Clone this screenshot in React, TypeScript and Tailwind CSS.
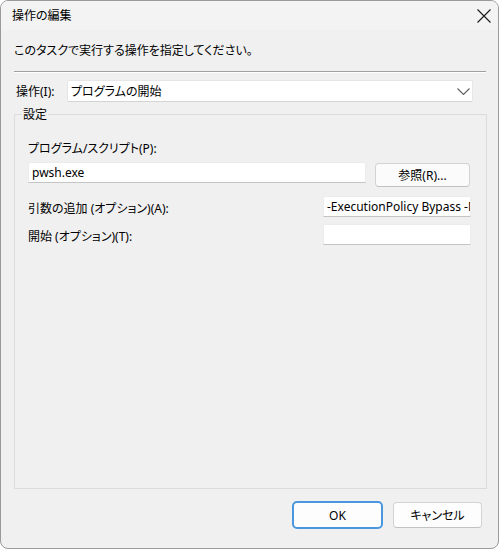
const font = {
  fontFamily: '"Noto Sans", "Noto Sans CJK JP", sans-serif',
};

function TextBox({ value, className }: { value: string; className: string }) {
  return (
    <input
      readOnly
      defaultValue={value}
      className={`h-[21px] bg-white border border-[#ececec] border-b-[#c4c4c4] pl-[3px] text-[12px] text-black outline-none ${className}`}
    />
  );
}

export default function App() {
  return (
    <div className="w-[500px] h-[549px] bg-white" style={font}>
      <div className="w-[499px] h-[549px] border border-[#9a9a9a] rounded-[8px] bg-[#f0f0f0] overflow-hidden flex flex-col text-[12px] leading-[17px] text-black [font-feature-settings:'palt']">
        {/* title bar */}
        <div className="h-[29px] shrink-0 flex items-center justify-between pl-[11px] pr-[7px] bg-[#f3f3f3]">
          <span>操作の編集</span>
          <svg width="14" height="14" viewBox="0 0 14 14" className="text-[#1a1a1a]">
            <path d="M0.5 0.5 L13.5 13.5 M13.5 0.5 L0.5 13.5" stroke="currentColor" strokeWidth="1.1" />
          </svg>
        </div>

        <div className="flex flex-col pl-[13px]">
          <p className="pt-[12px]">このタスクで実行する操作を指定してください。</p>

          <div className="mt-[12px] w-[472px] border-t border-[#a0a0a0] border-b border-b-white" />

          {/* action */}
          <div className="mt-[7px] flex items-center h-[22px]">
            <span className="w-[53px] pl-[2px]">操作(I):</span>
            <div className="w-[406px] h-[22px] bg-white border border-[#e6e6e6] border-b-[#d4d4d4] rounded-[2px] flex items-center justify-between pl-[3px] pr-[2px]">
              <span>プログラムの開始</span>
              <svg width="13" height="7" viewBox="0 0 13 7" className="text-[#606060]">
                <path d="M0.5 0.5 L6.5 6.5 L12.5 0.5" fill="none" stroke="currentColor" strokeWidth="1.1" />
              </svg>
            </div>
          </div>

          {/* settings group */}
          <div className="mt-[12px] w-[473px] h-[375px] border border-[#dcdcdc] flex flex-col">
            <span className="-mt-[9px] ml-[7px] w-fit px-[1px] bg-[#f0f0f0]">設定</span>

            <div className="flex flex-col px-[13px]">
              <span className="mt-[17px]">プログラム/スクリプト(P):</span>
              <div className="mt-[5px] flex items-start">
                <TextBox value="pwsh.exe" className="w-[338px]" />
                <button className="ml-[9px] mt-[1px] w-[95px] h-[24px] bg-[#fbfbfb] border border-[#d3d3d3] border-b-[#c2c2c2] rounded-[4px] text-[12px]">
                  参照(R)...
                </button>
              </div>

              <div className="mt-[9px] w-[443px] flex items-start justify-between">
                <span className="pt-[4px]">引数の追加 (オプション)(A):</span>
                <TextBox value="-ExecutionPolicy Bypass -NoProfile -File script.ps1" className="w-[148px]" />
              </div>

              <div className="mt-[7px] w-[443px] flex items-start justify-between">
                <span className="pt-[4px]">開始 (オプション)(T):</span>
                <TextBox value="" className="w-[148px]" />
              </div>
            </div>
          </div>
        </div>

        {/* buttons */}
        <div className="mt-[12px] flex items-center justify-end gap-[10px] pr-[16px]">
          <button className="w-[91px] h-[28px] bg-[#fdfdfd] border-2 border-[#4a97df] rounded-[5px] text-[12px]">
            OK
          </button>
          <button className="w-[89px] h-[26px] bg-[#fdfdfd] border border-[#d3d3d3] border-b-[#c2c2c2] rounded-[4px] text-[12px]">
            キャンセル
          </button>
        </div>
      </div>
    </div>
  );
}
